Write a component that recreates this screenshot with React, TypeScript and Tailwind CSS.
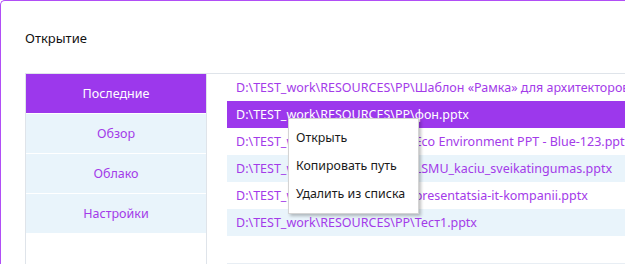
import React from 'react';

const rows = [
  'D:\\TEST_work\\RESOURCES\\PP\\Шаблон «Рамка» для архитекторов.pptx',
  'D:\\TEST_work\\RESOURCES\\PP\\фон.pptx',
  'D:\\TEST_work\\RESOURCES\\PP\\Eco Environment PPT - Blue-123.pptx',
  'D:\\TEST_work\\RESOURCES\\PP\\LSMU_kaciu_sveikatingumas.pptx',
  'D:\\TEST_work\\RESOURCES\\PP\\presentatsia-it-kompanii.pptx',
  'D:\\TEST_work\\RESOURCES\\PP\\Тест1.pptx',
];

const tabs = ['Последние', 'Обзор', 'Облако', 'Настройки'];

export default function App() {
  const selected = 1;

  return (
    <div className="relative h-[264px] w-[625px] overflow-hidden bg-white font-['Noto_Sans',sans-serif] text-[12.5px]">
      <div className="h-full rounded-tl-[5px] border-l border-t border-[#b14ef6] pl-6 pt-[28px]">
        <h1 className="h-[18px] text-[13px] leading-[18px] text-[#111]">Открытие</h1>

        {/* Content */}
        <div className="mt-[26px] flex h-[200px] border-t border-[#dfe4ea]">
          {/* Left tabs */}
          <div className="w-[182px] shrink-0 border-x border-[#dfe4ea]">
            {tabs.map((t, i) => (
              <div
                key={t}
                className={
                  i === 0
                    ? 'flex h-[40px] items-center justify-center border-b border-white bg-[#9c38ec] pt-[2px] text-white'
                    : 'flex h-[40px] items-center justify-center border-b border-white bg-[#e9f4fb] pt-[2px] text-[#a33be9]'
                }
              >
                {t}
              </div>
            ))}
          </div>

          {/* Recent list */}
          <div className="ml-5 h-[190px] min-w-0 flex-1 border-b border-[#e8eef4]">
            {rows.map((r, i) => (
              <div
                key={r}
                className={
                  i === selected
                    ? 'flex h-[27px] items-center overflow-hidden whitespace-nowrap bg-[#9c38ec] pl-[9px] pt-[2px] text-white'
                    : i % 2 === 1
                      ? 'flex h-[27px] items-center overflow-hidden whitespace-nowrap bg-[#e9f4fb] pl-[9px] pt-[2px] text-[#a33be9]'
                      : 'flex h-[27px] items-center overflow-hidden whitespace-nowrap bg-white pl-[9px] pt-[2px] text-[#a33be9]'
                }
              >
                {r}
              </div>
            ))}
          </div>
        </div>
      </div>

      {/* Context menu */}
      <div className="absolute left-[288px] top-[118px] w-[131px] border border-[#d4d4d4] bg-white py-[5px] text-[12.4px] text-[#1a1a1a] shadow-[2px_2px_3px_rgba(0,0,0,0.25)]">
        <div className="flex h-[28px] items-center px-[7px]">Открыть</div>
        <div className="flex h-[28px] items-center px-[7px]">Копировать путь</div>
        <div className="flex h-[28px] items-center px-[7px]">Удалить из списка</div>
      </div>
    </div>
  );
}
